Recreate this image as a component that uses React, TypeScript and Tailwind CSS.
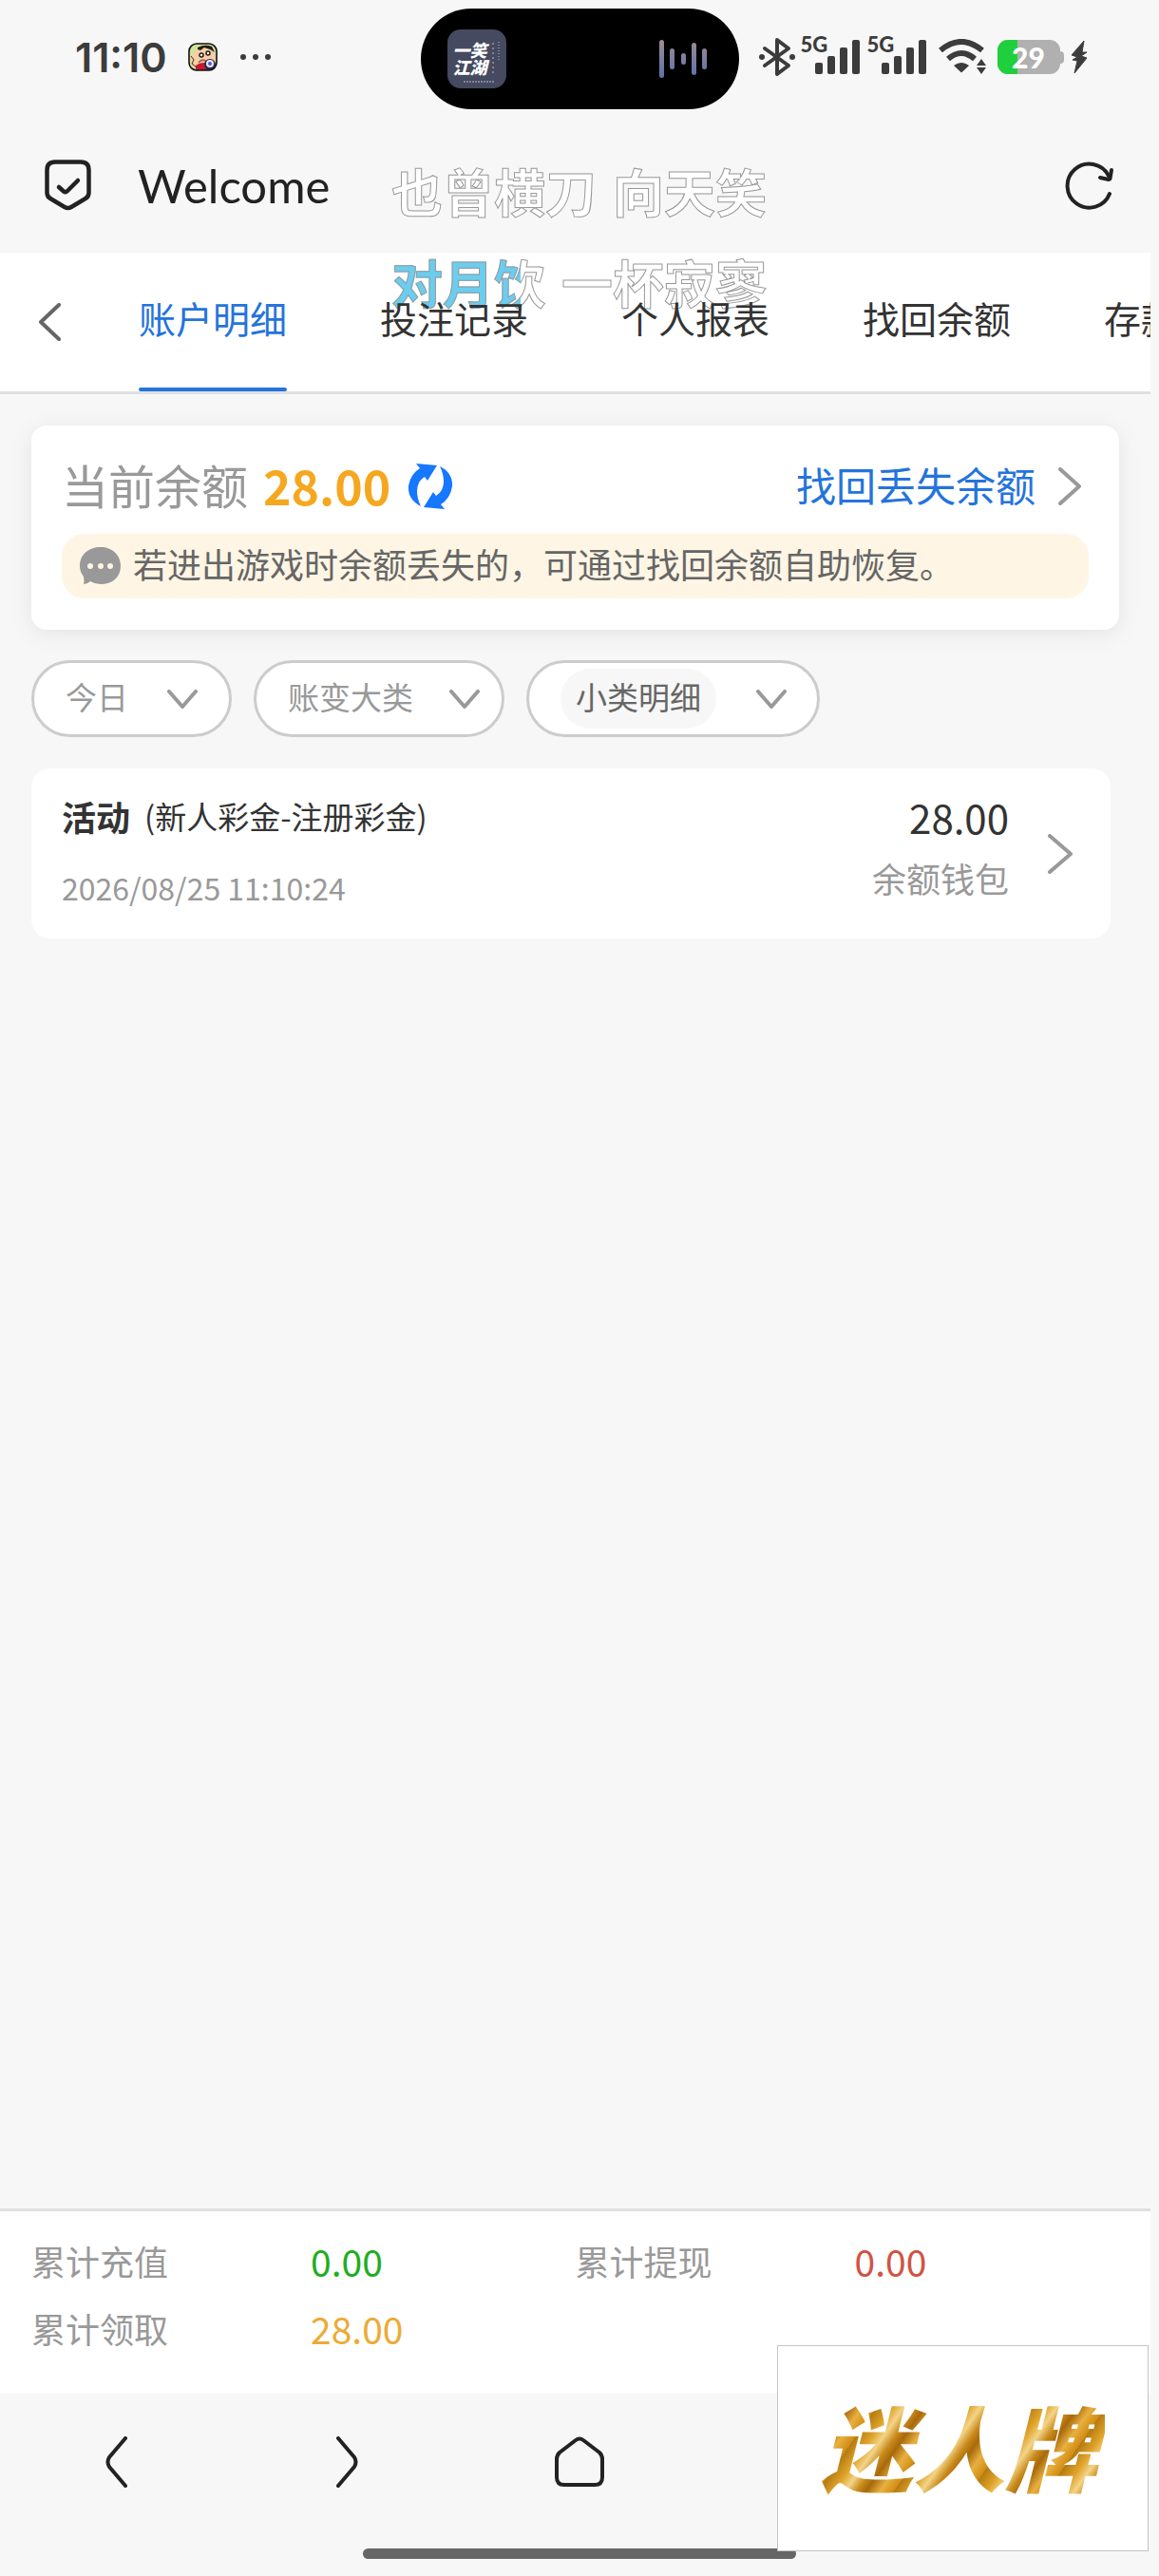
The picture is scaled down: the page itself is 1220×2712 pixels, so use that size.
import { useState } from 'react';
import type { ReactNode } from 'react';

const TABS = ['账户明细', '投注记录', '个人报表', '找回余额', '存款记录'];

const TOTALS = [
  { label: '累计充值', value: '0.00', color: 'text-[#1fad1f]' },
  { label: '累计提现', value: '0.00', color: 'text-[#cf5443]' },
  { label: '累计领取', value: '28.00', color: 'text-[#ecab35]' },
];

const SIGNAL_BARS = [
  { x: 15, y: 28, h: 12 },
  { x: 28, y: 21, h: 19 },
  { x: 41, y: 12, h: 28 },
  { x: 54, y: 4, h: 36 },
];

const WAVE_BARS = [
  { x: 0, y: 0, h: 40 },
  { x: 11, y: 9, h: 22 },
  { x: 23, y: 14, h: 12 },
  { x: 34, y: 3, h: 34 },
  { x: 45, y: 9, h: 22 },
];

function AppBadge() {
  return (
    <svg width="31" height="30" viewBox="0 0 31 30">
      <defs>
        <clipPath id="badge">
          <rect x="1" y="1" width="29" height="28" rx="8" />
        </clipPath>
      </defs>
      <g clipPath="url(#badge)">
        <rect width="31" height="30" fill="#cfe39a" />
        <path d="M2 14 Q6 10 10 7 Q20 3 27 8 L30 18 L24 30 H8 Q3 22 2 14Z" fill="#f6cfa6" />
        <path d="M10 5 Q18 1 25 4 L28 10 L23 7 L17 5 L13 8 L10 7Z" fill="#241d1a" />
        <path d="M8 30 V24 Q14 19 21 22 V30Z" fill="#c8182f" />
        <path d="M11 21 Q15 16 20 20" stroke="#a5685c" strokeWidth="2" fill="none" />
        <path d="M3 14 L6 18 L4 22 L9 26" stroke="#3b2a20" strokeWidth="1" fill="none" />
        <circle cx="14" cy="13" r="2" fill="#fff" stroke="#241d1a" strokeWidth="1.5" />
        <circle cx="21" cy="11" r="2" fill="#fff" stroke="#241d1a" strokeWidth="1.5" />
        <circle cx="23" cy="23" r="6" fill="#2b2a4d" />
        <circle cx="23" cy="22" r="4" fill="#e8e8ff" />
        <circle cx="23" cy="22" r="2" fill="#5a55c8" />
      </g>
      <rect x="1" y="1" width="29" height="28" rx="8" fill="none" stroke="#111" strokeWidth="1.6" />
    </svg>
  );
}

function BluetoothIcon() {
  return (
    <svg width="40" height="44" viewBox="0 0 40 44" fill="none" stroke="#3c3c3c" strokeWidth="4" strokeLinejoin="round" strokeLinecap="round">
      <path d="M7 13 L32 31 L20 40 V4 L32 13 L7 31" />
      <circle cx="4" cy="22" r="3" fill="#3c3c3c" stroke="none" />
      <circle cx="36" cy="22" r="3" fill="#3c3c3c" stroke="none" />
    </svg>
  );
}

function Signal() {
  return (
    <div className="relative h-11 w-[62px]">
      <span className="absolute left-0 top-0 font-[Lato] text-[22px] font-black leading-[18px]">5G</span>
      <svg className="block" width="62" height="44" viewBox="0 0 62 44" fill="#3c3c3c">
        {SIGNAL_BARS.map((bar) => (
          <rect key={bar.x} x={bar.x} y={bar.y} width="8" height={bar.h} rx="2" />
        ))}
      </svg>
    </div>
  );
}

function WifiIcon() {
  return (
    <svg width="50" height="38" viewBox="0 0 50 38" fill="none" stroke="#3c3c3c" strokeWidth="6">
      <path d="M2 12 Q24 -6 46 12" />
      <path d="M10 21 Q24 9 38 21" />
      <path d="M16 28 Q24 22 32 28 L24 35.500Z" fill="#3c3c3c" stroke="none" />
      <path d="M45 21 L50 28 H40Z M40 30 H50 L45 37Z" fill="#3c3c3c" stroke="none" />
    </svg>
  );
}

function Battery() {
  return (
    <div className="relative h-9 w-[70px]">
      <svg className="block" width="70" height="36" viewBox="0 0 70 36">
        <defs>
          <clipPath id="cell">
            <rect width="66" height="36" rx="11" />
          </clipPath>
        </defs>
        <rect x="62" y="12" width="8" height="13" rx="4" fill="#b0b0b0" />
        <g clipPath="url(#cell)">
          <rect width="66" height="36" fill="#b0b0b0" />
          <rect width="21" height="36" fill="#20cf3c" />
        </g>
      </svg>
      <span className="absolute left-0 top-0 w-[66px] text-center font-[Lato] text-[30px] font-black leading-9 text-white">29</span>
    </div>
  );
}

function StatusBar() {
  return (
    <div className="grid h-[124px] grid-cols-[1fr_auto_1fr] pt-[9px] text-[#3c3c3c]">
      <div className="flex h-[102px] items-center pl-[79px]">
        <span className="font-[Inter] text-[43px] font-semibold leading-none">11:10</span>
        <div className="ml-[22px] mr-6">
          <AppBadge />
        </div>
        <svg width="32" height="6" viewBox="0 0 32 6" fill="#3c3c3c">
          <circle cx="3" cy="3" r="3" />
          <circle cx="16" cy="3" r="3" />
          <circle cx="29" cy="3" r="3" />
        </svg>
      </div>

      {/* Dynamic island */}
      <div className="flex h-[106px] w-[335px] items-center justify-between rounded-full bg-black pl-7 pr-[34px]">
        <div className="relative h-[62px] w-[62px] rounded-[14px] bg-[#454a60] pl-[6px] pt-3 text-[18px] font-black italic leading-[18px] text-white">
          <div>一笑</div>
          <div>江湖</div>
          <svg className="absolute inset-0" width="62" height="62" viewBox="0 0 62 62" stroke="#b9bccb" strokeWidth="1" fill="none">
            <path d="M48 14 V46" strokeDasharray="2 3" />
            <path d="M54 13 V32" strokeDasharray="1 2" />
            <path d="M17 55 H49" strokeDasharray="2 1" />
          </svg>
        </div>
        <svg width="50" height="40" viewBox="0 0 50 40">
          <defs>
            <linearGradient id="wave" x1="0" y1="0" x2="0" y2="40" gradientUnits="userSpaceOnUse">
              <stop offset="0" stopColor="#a08a94" />
              <stop offset="1" stopColor="#5a72a8" />
            </linearGradient>
          </defs>
          {WAVE_BARS.map((bar) => (
            <rect key={bar.x} x={bar.x} y={bar.y} width="5" height={bar.h} rx="2.500" fill="url(#wave)" />
          ))}
        </svg>
      </div>

      <div className="flex h-[102px] items-center pl-5">
        <BluetoothIcon />
        <div className="ml-[5px] flex gap-2">
          <Signal />
          <Signal />
        </div>
        <div className="ml-[13px] mr-3">
          <WifiIcon />
        </div>
        <Battery />
        <svg className="ml-[7px]" width="18" height="36" viewBox="0 0 18 36" fill="#3c3c3c" stroke="#3c3c3c" strokeWidth="1" strokeLinejoin="round">
          <path d="M14 1 L1 16 L7 18 L2 21 L7 22 L4 35 L17 19 L11 17 L17 13 L12 13Z" />
        </svg>
      </div>
    </div>
  );
}

function Lyrics() {
  return (
    <div className="pointer-events-none absolute left-[412px] top-[161px] z-10 text-[54px] font-bold leading-[80px] text-white [-webkit-text-stroke:1px_#999]">
      <div className="flex gap-[17px]">
        <span>也曾横刀</span>
        <span>向天笑</span>
      </div>
      <div className="mt-4 flex gap-[17px]">
        <span className="bg-[linear-gradient(90deg,#6bcdef_84%,#ffffff_84%)] bg-clip-text text-transparent">对月饮</span>
        <span>一杯寂寥</span>
      </div>
    </div>
  );
}

function Chevron({ className, d, width, height }: { className?: string; d: string; width: number; height: number }) {
  return (
    <svg className={className} width={width} height={height} viewBox={`0 0 ${width} ${height}`} fill="none" stroke="currentColor" strokeWidth="4" strokeLinecap="round" strokeLinejoin="round">
      <path d={d} />
    </svg>
  );
}

function Filter({ label, value, className, chip }: { label: string; value: string; className: string; chip?: boolean }) {
  return (
    <div className={`flex h-[81px] items-center justify-between rounded-full border-[3px] border-[#ccc] bg-white pl-[33px] text-[33px] text-[#999] ${className}`}>
      <select
        aria-label={label}
        className={chip ? 'h-[63px] appearance-none rounded-full bg-[#f7f7f7] px-4 pb-1 text-[#666] outline-none' : 'appearance-none bg-transparent pb-1 outline-none'}
      >
        <option>{value}</option>
      </select>
      <Chevron d="M2 2 L16 18 L30 2" width={32} height={20} />
    </div>
  );
}

function NavButton({ label, children }: { label: string; children: ReactNode }) {
  return (
    <button type="button" aria-label={label} className="flex h-[144px] items-center justify-center">
      {children}
    </button>
  );
}

export default function App() {
  const [activeTab, setActiveTab] = useState(0);

  return (
    <div className="relative flex min-h-screen flex-col overflow-hidden bg-[#f7f7f7] font-['Noto_Sans_CJK_SC',sans-serif] text-[#333]">
      <StatusBar />

      {/* Browser header */}
      <header className="flex h-[142px] items-center px-[47px] text-[#222]">
        <svg width="49" height="54" viewBox="0 0 49 54" fill="none" stroke="currentColor" strokeWidth="4.500" strokeLinecap="round" strokeLinejoin="round">
          <path d="M11 2.500 H38 Q46.500 2.500 46.500 11 V35 Q46.500 39 43 41 L28 50 Q24.500 52 21 50 L6 41 Q2.500 39 2.500 35 V11 Q2.500 2.500 11 2.500Z" />
          <path d="M15 29 L20 33.500 Q22 35 24 33 L35 22" />
        </svg>
        <h1 className="ml-[49px] flex-1 font-[Lato] text-[49px] leading-none">Welcome</h1>
        <button type="button" aria-label="刷新">
          <svg width="52" height="52" viewBox="0 0 52 52" fill="none" stroke="currentColor" strokeWidth="4" strokeLinecap="round" strokeLinejoin="round">
            <path d="M47 35 A23 23 0 1 1 46 16" />
            <path d="M37 18 L46 20 Q47 20 47.500 19 L49 10" />
          </svg>
        </button>
      </header>
      <Lyrics />

      {/* Tabs */}
      <nav className="mr-[9px] flex h-[149px] overflow-hidden border-b-[3px] border-[#e0e0e0] bg-white">
        <button type="button" aria-label="返回" className="w-[146px] shrink-0 pl-[41px] text-[#666]">
          <Chevron d="M21 2 L2 20 L21 38" width={23} height={40} />
        </button>
        <div className="relative z-20 flex gap-[98px]">
          {TABS.map((tab, i) => (
            <button
              key={tab}
              type="button"
              onClick={() => setActiveTab(i)}
              className={`flex w-[156px] shrink-0 flex-col justify-between whitespace-nowrap pt-[39px] text-[39px] leading-[58px] ${i === activeTab ? 'text-[#2474dc]' : 'text-[#333]'}`}
            >
              {tab}
              <span className={`h-1 w-full rounded-full ${i === activeTab ? 'bg-[#2474dc]' : ''}`} />
            </button>
          ))}
        </div>
      </nav>

      <main className="flex-1">
        {/* Balance */}
        <section className="ml-[33px] mr-[42px] mt-[33px] h-[215px] rounded-2xl bg-white px-8 pt-7 shadow-[0_4px_24px_rgba(0,0,0,0.08)]">
          <div className="flex h-[72px] items-center">
            <span className="pb-1 text-[49px] leading-[68px] text-[#999]">当前余额</span>
            <span className="ml-4 pb-1 text-[50px] font-bold leading-[68px] text-[#f5a81f]">28.00</span>
            <button type="button" aria-label="刷新余额" className="ml-[18px]">
              <svg width="48" height="48" viewBox="0 0 48 48" fill="#1677ff">
                <path d="M14 45 Q0 38 1 24 Q3 11 13 5 L9 0 L31 2 L21 18 L18 14 Q10 19 10 29 Q10 37 14 45Z" />
                <path d="M34 3 Q48 10 47 24 Q45 37 35 43 L39 48 L17 46 L27 30 L30 34 Q38 29 38 19 Q38 11 34 3Z" />
              </svg>
            </button>
            <a href="#recover" className="ml-auto flex items-center text-[42px] leading-[60px] text-[#2474dc]">
              <span className="pb-1">找回丢失余额</span>
              <Chevron className="ml-6 mr-2 text-[#999]" d="M2 2 L22 20 L2 38" width={24} height={40} />
            </a>
          </div>
          <div className="mt-[14px] flex h-[68px] items-center rounded-3xl bg-[#fef5e4] pl-[19px] text-4xl text-[#666]">
            <svg className="mr-[13px] shrink-0" width="43" height="40" viewBox="0 0 43 40">
              <path d="M22 0 C34 0 43 8 43 20 S34 39 22 39 Q16 39 11 36 Q8 39 4 39 Q5 36 4 31 Q0 26 0 20 C0 8 9 0 22 0Z" fill="#999" />
              <circle cx="11" cy="20" r="3" fill="#fef5e4" />
              <circle cx="22" cy="20" r="3" fill="#fef5e4" />
              <circle cx="32" cy="20" r="3" fill="#fef5e4" />
            </svg>
            <p className="pb-[6px]">若进出游戏时余额丢失的，可通过找回余额自助恢复。</p>
          </div>
        </section>

        {/* Filters */}
        <div className="ml-[33px] mt-8 flex gap-[23px]">
          <Filter label="日期" value="今日" className="w-[211px] pr-[33px]" />
          <Filter label="账变大类" value="账变大类" className="w-[264px] pr-[23px]" />
          <Filter label="小类明细" value="小类明细" className="w-[309px] pr-8" chip />
        </div>

        {/* Record */}
        <a href="#record" className="ml-[33px] mr-[51px] mt-[33px] flex h-[179px] items-center rounded-[20px] bg-white pl-8 pr-10">
          <div className="flex-1 pb-2">
            <div className="flex items-center gap-[15px] leading-[54px]">
              <span className="text-4xl font-bold leading-[54px]">活动</span>
              <span className="text-[33px]">(新人彩金-注册彩金)</span>
            </div>
            <div className="mt-6 text-[32px] leading-[48px] text-[#999]">2026/08/25 11:10:24</div>
          </div>
          <div className="pb-[14px] text-right">
            <div className="text-[42px] leading-[60px]">28.00</div>
            <div className="mt-1 text-4xl leading-[60px] text-[#999]">余额钱包</div>
          </div>
          <Chevron className="ml-[41px] text-[#999]" d="M2 2 L24 21 L2 40" width={26} height={42} />
        </a>
      </main>

      {/* Totals */}
      <dl className="mr-[9px] grid h-[195px] grid-cols-2 content-start border-t-[3px] border-[#e0e0e0] bg-white px-[33px] pt-4">
        {TOTALS.map((item) => (
          <div key={item.label} className="flex h-[71px] items-center">
            <dt className="w-[294px] text-4xl text-[#999]">{item.label}</dt>
            <dd className={`text-[39px] leading-[56px] ${item.color}`}>{item.value}</dd>
          </div>
        ))}
      </dl>

      {/* Browser toolbar */}
      <footer className="h-48 text-[#222]">
        <div className="grid grid-cols-5">
          <NavButton label="后退">
            <Chevron d="M22 2 L5 22 Q2 27 5 32 L22 52" width={24} height={54} />
          </NavButton>
          <NavButton label="前进">
            <Chevron d="M2 2 L19 22 Q22 27 19 32 L2 52" width={24} height={54} />
          </NavButton>
          <NavButton label="主页">
            <Chevron d="M22 4 Q26 1 30 4 L47 17 Q50 20 50 24 V43 Q50 51 42 51 H10 Q2 51 2 43 V24 Q2 20 5 17Z" width={52} height={54} />
          </NavButton>
        </div>
        <div className="mx-auto mt-[19px] h-[11px] w-[456px] rounded-full bg-[#666]" />
      </footer>

      {/* Floating logo */}
      <div className="absolute bottom-[26px] right-[11px] flex h-[217px] w-[391px] items-center justify-center border border-[#c4c4c4] bg-white pb-2 pr-2">
        <span className="bg-[repeating-linear-gradient(125deg,#b37a12_0px,#e0a42a_14px,#f3d488_24px,#c98a1a_34px,#a8690c_42px,#e8b040_54px,#d08c12_66px)] bg-clip-text px-2 text-[97px] font-black italic leading-[120px] text-transparent">
          迷人牌
        </span>
      </div>
    </div>
  );
}
